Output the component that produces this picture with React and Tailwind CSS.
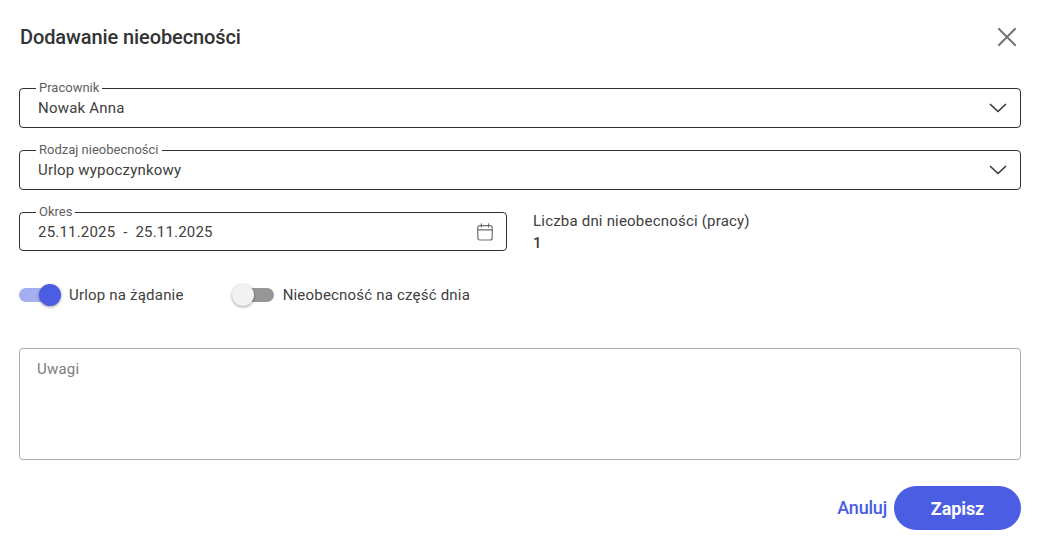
import React from "react";

function Chevron() {
  return (
    <svg width="18" height="10" viewBox="0 0 18 10" fill="none" stroke="#3a3a3a" strokeWidth="1.7" strokeLinecap="round" strokeLinejoin="round">
      <path d="M1.5 1.5 L9 8.5 L16.5 1.5" />
    </svg>
  );
}

function Field({ label, value, className = "", height = "h-[40px]", icon }) {
  return (
    <div className={`relative flex items-center justify-between rounded-[4px] border border-[#2f2f2f] pl-[18px] pr-[13px] ${height} ${className}`}>
      <span className="absolute left-[16px] top-[-8px] bg-white px-[3px] text-[13px] leading-[14px] text-[#5f5f5f]">{label}</span>
      <span className="text-[15px] tracking-[0.2px] leading-[20px] text-[#404040]">{value}</span>
      {icon}
    </div>
  );
}

function Toggle({ on, label }) {
  return (
    <div className="flex items-center gap-[9px]">
      <div className={`relative h-[14px] w-[41px] rounded-full ${on ? "bg-[#a5aef0]" : "bg-[#979797]"}`}>
        <div
          className={`absolute top-[-4px] h-[22px] w-[22px] rounded-full shadow-[0_1px_3px_rgba(0,0,0,0.4)] ${on ? "right-[-1px] bg-[#4a5de3]" : "left-[-1px] bg-[#f2f2f2]"}`}
        />
      </div>
      <span className="text-[15px] tracking-[0.2px] leading-[20px] text-[#404040]">{label}</span>
    </div>
  );
}

export default function App() {
  return (
    <div className="h-[545px] w-[1041px] bg-white pl-[19px] pr-[20px] font-['Roboto',sans-serif]">
      <div className="flex h-[88px] items-start justify-between">
        <h1 className="ml-[1px] mt-[24px] text-[20px] font-medium leading-[26px] tracking-[-0.1px] text-[#333333]">Dodawanie nieobecności</h1>
        <svg className="mt-[26px] mr-[3px]" width="22" height="22" viewBox="0 0 22 22" fill="none" stroke="#757575" strokeWidth="2" strokeLinecap="square">
          <path d="M3 3 L19 19 M19 3 L3 19" />
        </svg>
      </div>

      <div className="flex flex-col gap-[22px]">
        <Field label="Pracownik" value="Nowak Anna" icon={<Chevron />} />
        <Field label="Rodzaj nieobecności" value="Urlop wypoczynkowy" icon={<Chevron />} />
        <div className="flex items-start">
          <Field
            label="Okres"
            className="w-[488px]"
            height="h-[39px]"
            value={<span className="whitespace-pre">25.11.2025  -  25.11.2025</span>}
            icon={
              <svg width="16" height="18" viewBox="0 0 16 18" fill="none" stroke="#6e6e6e" strokeWidth="1.2" strokeLinecap="round">
                <rect x="0.8" y="2.6" width="14.4" height="14.4" rx="2" />
                <path d="M0.8 6.8 H15.2 M4.4 0.8 V4 M11.6 0.8 V4" />
              </svg>
            }
          />
          <div className="ml-[26px] mt-[-1px] flex flex-col">
            <span className="text-[15px] leading-[20px] tracking-[0.2px] text-[#404040]">Liczba dni nieobecności (pracy)</span>
            <span className="mt-[2px] text-[15px] font-medium leading-[20px] text-[#404040]">1</span>
          </div>
        </div>
      </div>

      <div className="mt-[32px] flex items-center gap-[49px]">
        <Toggle on label="Urlop na żądanie" />
        <Toggle label="Nieobecność na część dnia" />
      </div>

      <div className="mt-[43px] h-[112px] rounded-[4px] border border-[#ababab] px-[17px] py-[10px] text-[15px] leading-[20px] tracking-[0.2px] text-[#7d7d7d]">
        Uwagi
      </div>

      <div className="mt-[26px] flex items-center justify-end gap-[7px]">
        <span className="text-[18px] font-medium leading-[24px] tracking-[-0.2px] text-[#4a5de3]">Anuluj</span>
        <div className="flex h-[44px] w-[127px] items-center justify-center rounded-full bg-[#4a5de3] text-[18px] font-bold tracking-[-0.1px] text-white">Zapisz</div>
      </div>
    </div>
  );
}
